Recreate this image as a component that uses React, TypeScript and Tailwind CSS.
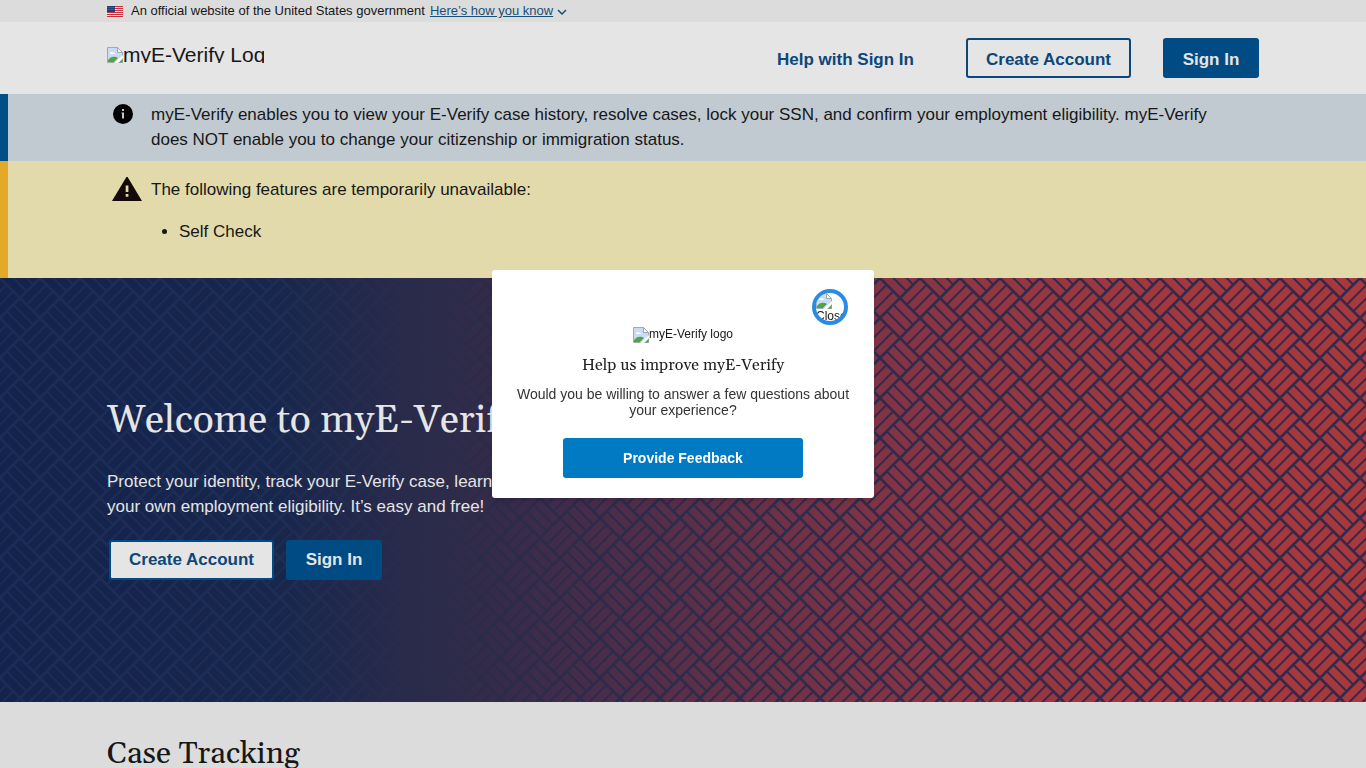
import React, { useState } from 'react';

const SANS = "font-['Liberation_Sans',Arial,sans-serif]";
const SERIF = "font-[Georgia,Gelasio,'Liberation_Serif',serif]";

interface FallbackImageProps {
  label: string;
  className?: string;
}

// Placeholder shown while an image asset is missing
const FallbackImage: React.FC<FallbackImageProps> = ({ label, className = '' }) => (
  <span className={`flex overflow-hidden whitespace-nowrap ${className}`}>
    <svg viewBox="0 0 16 16" className="h-4 w-4 shrink-0" aria-hidden="true">
      <path d="M0.5 0.5h10l5 5v10h-15z" fill="#c9dcf3" stroke="#a3a9ae" />
      <path d="M10.5 0.5v5h5z" fill="#fff" stroke="#a3a9ae" />
      <path d="M3 6.5a1.8 1.8 0 0 1 3-1 1.5 1.5 0 0 1 2 1.5H3z" fill="#fff" />
      <path d="M1 15v-2c2-3 5-4 8-3l2 1-4 4z" fill="#4fa543" />
      <path d="M7 16l9-8v3l-5 5z" fill="#fff" />
      <path d="M12 15.500h3.500V12z" fill="#4fa543" />
    </svg>
    <span>{label}</span>
  </span>
);

const FlagIcon = () => (
  <svg viewBox="0 0 16 11" className="h-[11px] w-4" aria-hidden="true">
    <rect width="16" height="11" fill="#e6e0e0" />
    {[0, 2, 4, 6, 8, 10].map((y) => (
      <rect key={y} y={y} width="16" height="1" fill="#c5303c" />
    ))}
    <rect width="8" height="6" fill="#1d3c78" />
    {[1, 3, 5, 7].map((x) => (
      <g key={x} fill="#a9b5d0">
        <circle cx={x} cy="1.500" r="0.400" />
        <circle cx={x} cy="3.500" r="0.400" />
      </g>
    ))}
  </svg>
);

const GovBanner = () => (
  <div className="bg-[#dcdcdc]">
    <div className="mx-auto flex h-[22px] max-w-6xl items-center text-[13px] leading-4">
      <FlagIcon />
      <span className="ml-2">An official website of the United States government</span>
      <button type="button" className="ml-[5px] flex items-center text-[#1a4f73]">
        <span className="underline">Here’s how you know</span>
        <svg viewBox="0 0 10 6" className="ml-1 mt-[2px] h-[6px] w-[10px]" fill="none" stroke="currentColor" strokeWidth={1.5} aria-hidden="true">
          <path d="M1 1l4 4 4-4" />
        </svg>
      </button>
    </div>
  </div>
);

const Header = () => (
  <header className="bg-[#e5e5e5]">
    <div className="mx-auto flex h-[72px] max-w-6xl items-center justify-between">
      <a href="#home" className="mb-[6px]">
        <FallbackImage label="myE-Verify Logo" className="h-4 w-[157px] text-[21px] leading-4" />
      </a>
      <nav className="flex items-center gap-8 text-[17px] font-bold text-[#0b4778]">
        <a href="#help" className="mr-5 mt-[3px]">Help with Sign In</a>
        <button type="button" className="h-10 rounded-[3px] border-2 border-[#0b4778] px-[18px] pt-[3px]">
          Create Account
        </button>
        <button type="button" className="h-10 w-24 rounded-[3px] bg-[#004b83] pt-[3px] text-[#e5e5e5]">
          Sign In
        </button>
      </nav>
    </div>
  </header>
);

const InfoAlert = () => (
  <section className="border-l-8 border-[#005087] bg-[#c1cad0] pr-2">
    <div className="mx-auto flex max-w-6xl items-start pb-[9px] pl-[5px] pr-6 pt-2">
      <svg viewBox="0 0 22 22" className="mr-[17px] mt-px h-[22px] w-[22px] shrink-0" aria-hidden="true">
        <circle cx="11" cy="11" r="10" fill="#000" />
        <path d="M10 6h2v2h-2zM9.500 9.500h2.500v6h-2v-5h-.5z" fill="#c1cad0" />
      </svg>
      <p className="text-[17px] leading-[25px]">
        myE-Verify enables you to view your E-Verify case history, resolve cases, lock your SSN, and confirm your
        employment eligibility. myE-Verify does NOT enable you to change your citizenship or immigration status.
      </p>
    </div>
  </section>
);

const WarningAlert = () => (
  <section className="border-l-8 border-[#e5a929] bg-[#e3daab] pr-2">
    <div className="mx-auto flex max-w-6xl items-start pb-[34px] pl-[5px] pt-4">
      <svg viewBox="0 0 30 26" className="mr-[9px] h-[26px] w-[30px] shrink-0" aria-hidden="true">
        <path d="M15 -1l15 25H0z" fill="#150a0a" />
        <path d="M13.700 8.500h2.700v6.500h-2.700zM13.700 17h2.700v2.700h-2.700z" fill="#e3daab" />
      </svg>
      <div className="text-[17px] leading-[25px]">
        <p>The following features are temporarily unavailable:</p>
        <ul className="mt-[17px] list-disc pl-7">
          <li>Self Check</li>
        </ul>
      </div>
    </div>
  </section>
);

// Diagonal basket weave: a 40px tile holding one "/" block and one "\" block of three bricks
const HeroBackground = () => (
  <svg className="absolute inset-0 h-full w-full" aria-hidden="true">
    <defs>
      <linearGradient id="bricks">
        <stop offset="0" stopColor="#13234c" />
        <stop offset="0.200" stopColor="#17264c" />
        <stop offset="0.310" stopColor="#2b2b4a" />
        <stop offset="0.380" stopColor="#392b4b" />
        <stop offset="0.480" stopColor="#542e49" />
        <stop offset="0.600" stopColor="#763246" />
        <stop offset="0.720" stopColor="#923643" />
        <stop offset="0.850" stopColor="#a2383e" />
        <stop offset="1" stopColor="#a8393c" />
      </linearGradient>
      <linearGradient id="joints">
        <stop offset="0" stopColor="#1c2c56" />
        <stop offset="0.200" stopColor="#1e2d54" />
        <stop offset="0.310" stopColor="#2b2b4a" />
        <stop offset="0.600" stopColor="#2f2b4c" />
        <stop offset="1" stopColor="#36294b" />
      </linearGradient>
      <pattern id="weave" width="40" height="40" patternUnits="userSpaceOnUse">
        <g stroke="#fff" fill="none">
          <path strokeWidth="2.700" d="M-5-5l50 50M-5 45L45-5M-5 35L5 45M35-5L45 5M-5 5L5-5M35 45L45 35" />
          <g strokeWidth="2">
            <path d="M-13.300 26.700l20-20M-6.700 33.300l20-20M26.700 26.700l20-20M33.300 33.300l20-20" />
            <path d="M6.700-6.700l20 20M13.300-13.300l20 20M6.700 33.300l20 20M13.300 26.700l20 20" />
          </g>
        </g>
      </pattern>
      <mask id="weave-mask">
        <rect width="100%" height="100%" fill="url(#weave)" />
      </mask>
    </defs>
    <rect width="100%" height="100%" fill="url(#bricks)" />
    <rect width="100%" height="100%" fill="url(#joints)" mask="url(#weave-mask)" />
  </svg>
);

const Hero = () => (
  <section className="relative">
    <HeroBackground />
    <div className="relative mx-auto max-w-6xl pb-[122px] pt-[119px] text-[#e5e5e5]">
      <h1 className={`${SERIF} text-[39px] leading-[48px]`}>Welcome to myE-Verify</h1>
      <p className="mt-6 text-[17px] leading-[25px]">
        Protect your identity, track your E-Verify case, learn your rights, and
        <br />
        your own employment eligibility. It’s easy and free!
      </p>
      <div className="mt-[21px] flex gap-3 pl-[2px] text-[17px] font-bold">
        <button type="button" className="h-10 rounded-[3px] border-2 border-[#004b83] bg-[#e5e5e5] px-[18px] text-[#0b4778]">
          Create Account
        </button>
        <button type="button" className="h-10 w-24 rounded-[3px] bg-[#004b83]">
          Sign In
        </button>
      </div>
    </div>
  </section>
);

interface FeedbackDialogProps {
  onClose: () => void;
}

const FeedbackDialog: React.FC<FeedbackDialogProps> = ({ onClose }) => (
  <div className="fixed inset-0 z-10 flex items-center justify-center">
    <div
      role="dialog"
      aria-labelledby="feedback-title"
      className="flex w-[382px] flex-col items-center rounded-[3px] bg-white px-5 pb-5 pt-[19px] text-center shadow-md"
    >
      <button
        type="button"
        onClick={onClose}
        className="mr-[6px] h-9 w-9 self-end overflow-hidden rounded-full border-4 border-[#2a8be6] text-left text-[12px] leading-[14px]"
      >
        <span className="block h-7 w-7 overflow-hidden">
          <FallbackImage label="" />
          Close
        </span>
      </button>
      <FallbackImage label="myE-Verify logo" className="mt-[2px] h-4 text-[12px] leading-[14px]" />
      <h2 id="feedback-title" className={`${SERIF} mt-3 text-[16px] leading-5 text-[#222]`}>
        Help us improve myE-Verify
      </h2>
      <p className="mt-[11px] text-[14px] leading-4 text-[#333]">
        Would you be willing to answer a few questions about your experience?
      </p>
      <button type="button" className="mt-5 h-10 w-60 rounded-[3px] bg-[#007ac3] text-[14px] font-bold text-white">
        Provide Feedback
      </button>
    </div>
  </div>
);

export default function App() {
  const [showFeedback, setShowFeedback] = useState(true);

  // The page does not scroll while the feedback dialog is open
  return (
    <div className={`${SANS} min-h-screen bg-[#dcdcdc] text-[#171717] ${showFeedback ? 'h-screen overflow-hidden' : ''}`}>
      <GovBanner />
      <Header />
      <main>
        <InfoAlert />
        <WarningAlert />
        <Hero />
        <section className="mx-auto max-w-6xl pb-8 pt-[34px]">
          <h2 className={`${SERIF} text-[31px] leading-9`}>Case Tracking</h2>
        </section>
      </main>
      {showFeedback && <FeedbackDialog onClose={() => setShowFeedback(false)} />}
    </div>
  );
}
